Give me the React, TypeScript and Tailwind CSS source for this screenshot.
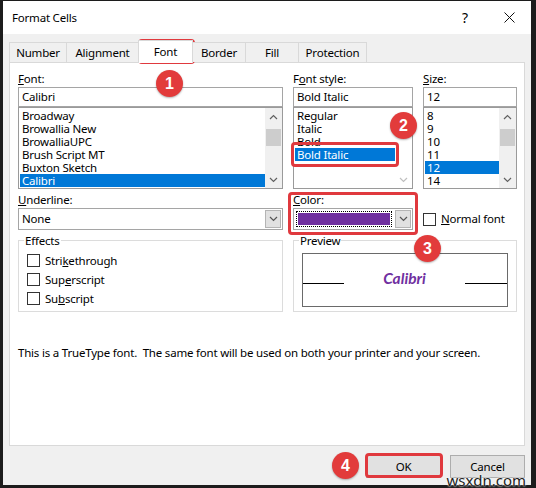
import clsx from "clsx"

const RED = "border-[#e0393e]"

function Chevron({ up, className }: { up?: boolean; className?: string }) {
  return (
    <svg width="9" height="6" viewBox="0 0 9 6" className={className}>
      <polyline
        points={up ? "1,5 4.5,1.5 8,5" : "1,1 4.5,4.5 8,1"}
        fill="none"
        stroke="currentColor"
        strokeWidth="1.2"
      />
    </svg>
  )
}

function ListBox({ items, selected, scroll }: { items: string[]; selected: number; scroll: "full" | "off" }) {
  return (
    <div className="flex h-[82px] border border-[#9a9a9a] bg-white">
      <div className="flex-1 overflow-hidden pt-[1px] pl-px">
        {items.map((t, i) => (
          <div
            key={t}
            className={clsx("h-[13px] pl-[2px] leading-[13px]", i === selected && "bg-[#0078d7] text-white")}
          >
            {t}
          </div>
        ))}
      </div>
      {scroll === "full" ? (
        <div className="flex w-[17px] flex-col bg-[#f0f0f0]">
          <div className="flex h-[17px] items-center justify-center text-[#606060]">
            <Chevron up />
          </div>
          <div className="mx-px mt-[4px] h-[17px] bg-[#cdcdcd]" />
          <div className="flex-1" />
          <div className="flex h-[17px] items-center justify-center text-[#606060]">
            <Chevron />
          </div>
        </div>
      ) : (
        <div className="flex w-[17px] flex-col justify-between">
          <div className="flex h-[17px] items-center justify-center text-[#bfbfbf]">
            <Chevron up />
          </div>
          <div className="flex h-[17px] items-center justify-center text-[#bfbfbf]">
            <Chevron />
          </div>
        </div>
      )}
    </div>
  )
}

function Field({ label, value }: { label: React.ReactNode; value: string }) {
  return (
    <>
      <div className="h-[17px] leading-[17px]">{label}</div>
      <div className="flex h-[20px] items-center border border-[#a5a5a5] bg-white pl-[3px]">{value}</div>
    </>
  )
}

function DropButton() {
  return (
    <div className="m-px flex w-[16px] items-center justify-center border border-[#b4b4b4] bg-[#e1e1e1] text-[#555]">
      <Chevron />
    </div>
  )
}

function Check({ children }: { children: React.ReactNode }) {
  return (
    <div className="flex h-[19px] items-center gap-[5px]">
      <div className="h-[13px] w-[13px] border border-[#333] bg-white" />
      <span>{children}</span>
    </div>
  )
}

function Badge({ n, className }: { n: number; className: string }) {
  return (
    <div
      className={clsx(
        "absolute flex h-[27px] w-[27px] items-center justify-center rounded-full bg-[#e23b3b] font-['Liberation_Sans',sans-serif] text-[16px] font-bold tracking-normal text-white shadow-[0_1px_2px_rgba(0,0,0,0.3)]",
        className
      )}
    >
      {n}
    </div>
  )
}

const tabs = [
  { name: "Number", w: "w-[58px]" },
  { name: "Alignment", w: "w-[73px]" },
  { name: "Font", w: "w-[55px]", active: true },
  { name: "Border", w: "w-[54px]" },
  { name: "Fill", w: "w-[54px]" },
  { name: "Protection", w: "w-[69px]" },
]

export default function App() {
  return (
    <div className="relative flex h-[488px] w-[536px] flex-col bg-[#1c1c1c] pt-px pr-[5px] pb-[3px] pl-[3px] font-['Noto_Sans',sans-serif] text-[11.5px] tracking-[-0.2px] text-black">
      {/* title bar */}
      <div className="flex h-[33px] items-center bg-white pl-[9px]">
        <span className="flex-1">Format Cells</span>
        <span className="w-[42px] text-[14px]">?</span>
        <svg width="11" height="11" viewBox="0 0 11 11" className="mr-[16px]">
          <path d="M0.5 0.5 L10.5 10.5 M10.5 0.5 L0.5 10.5" stroke="#111" strokeWidth="1" />
        </svg>
      </div>

      <div className="flex flex-1 flex-col bg-[#f0f0f0] px-[6px]">
        {/* tabs */}
        <div className="relative z-10 mt-[6px] flex h-[22px] items-end">
          {tabs.map((t) =>
            t.active ? (
              <div
                key={t.name}
                className={clsx(
                  "-mb-px -ml-px flex h-[23px] items-start justify-center border-x border-t border-[#d9d9d9] bg-white pt-[2px]",
                  t.w
                )}
              >
                {t.name}
              </div>
            ) : (
              <div
                key={t.name}
                className={clsx(
                  "-ml-px flex h-[20px] items-center justify-center border-x border-t border-[#d9d9d9] bg-[#f0f0f0] first:ml-0",
                  t.w
                )}
              >
                {t.name}
              </div>
            )
          )}
        </div>

        {/* panel */}
        <div className="flex flex-1 flex-col border border-[#d9d9d9] bg-white px-[8px] pt-[7px]">
          <div className="grid grid-cols-[265px_120px_94px] gap-x-[10px]">
            <div>
              <Field label={<><u>F</u>ont:</>} value="Calibri" />
              <ListBox
                items={["Broadway", "Browallia New", "BrowalliaUPC", "Brush Script MT", "Buxton Sketch", "Calibri"]}
                selected={5}
                scroll="full"
              />
            </div>
            <div>
              <Field label={<>F<u>o</u>nt style:</>} value="Bold Italic" />
              <ListBox items={["Regular", "Italic", "Bold", "Bold Italic"]} selected={3} scroll="off" />
            </div>
            <div>
              <Field label={<><u>S</u>ize:</>} value="12" />
              <ListBox items={["8", "9", "10", "11", "12", "14"]} selected={4} scroll="full" />
            </div>

            {/* underline / color / normal font */}
            <div className="mt-[2px]">
              <div className="h-[17px] leading-[17px]">
                <u>U</u>nderline:
              </div>
              <div className="flex h-[22px] border border-[#a5a5a5] bg-white">
                <span className="flex flex-1 items-center pl-[3px]">None</span>
                <DropButton />
              </div>
            </div>
            <div className="mt-[2px]">
              <div className="h-[17px] leading-[17px]">
                <u>C</u>olor:
              </div>
              <div className="flex h-[22px] border border-[#a5a5a5] bg-white">
                <div className="m-[2px] flex-1 border border-dotted border-black p-px">
                  <div className="h-full bg-[#7030a0]" />
                </div>
                <DropButton />
              </div>
            </div>
            <div className="mt-[2px] pt-[17px]">
              <div className="flex h-[22px] items-center gap-[5px]">
                <div className="h-[13px] w-[13px] border border-[#333] bg-white" />
                <span>
                  <u>N</u>ormal font
                </span>
              </div>
            </div>

            {/* groups */}
            <fieldset className="mt-[2px] h-[80px] border border-[#dcdcdc]">
              <legend className="ml-[5px] px-px leading-[17px]">Effects</legend>
              <div className="pt-[2px] pl-[8px]">
                <Check>
                  Stri<u>k</u>ethrough
                </Check>
                <Check>
                  Sup<u>e</u>rscript
                </Check>
                <Check>
                  Su<u>b</u>script
                </Check>
              </div>
            </fieldset>
            <fieldset className="col-span-2 mt-[2px] h-[80px] border border-[#dcdcdc]">
              <legend className="ml-[5px] px-px leading-[17px]">Preview</legend>
              <div className="mx-[8px] mt-[4px] h-[54px] border border-[#6a6a6a] pt-[16px]">
                <div className="flex items-end">
                  <div className="mb-[3px] h-px w-[41px] bg-black" />
                  <span className="flex-1 text-center font-['Lato',sans-serif] text-[15.5px] leading-[17px] font-bold tracking-normal text-[#7030a0] italic">
                    Calibri
                  </span>
                  <div className="mb-[3px] h-px w-[42px] bg-black" />
                </div>
              </div>
            </fieldset>
          </div>

          <div className="mt-[32px] leading-[17px] whitespace-pre">
            This is a TrueType font.  The same font will be used on both your printer and your screen.
          </div>
        </div>

        {/* footer */}
        <div className="flex h-[39px] justify-end gap-[9px] pt-[9px]">
          <div className="flex h-[23px] w-[75px] items-center justify-center border border-[#adadad] bg-[#e1e1e1]">OK</div>
          <div className="flex h-[23px] w-[75px] items-center justify-center border border-[#adadad] bg-[#e1e1e1]">
            Cancel
          </div>
        </div>
      </div>

      {/* annotations */}
      <div className={clsx("absolute top-[39px] left-[138px] h-[25px] w-[57px] rounded-[4px] border-[3px]", RED)} />
      <Badge n={1} className="top-[70px] left-[156px]" />
      <Badge n={2} className="top-[112px] left-[390px]" />
      <div className={clsx("absolute top-[142px] left-[291px] h-[25px] w-[108px] rounded-[4px] border-[3px]", RED)} />
      <div className={clsx("absolute top-[192px] left-[288px] h-[43px] w-[130px] rounded-[4px] border-[3px]", RED)} />
      <Badge n={3} className="top-[235px] left-[414px]" />
      <Badge n={4} className="top-[452px] left-[332px]" />
      <div className={clsx("absolute top-[453px] left-[365px] h-[25px] w-[78px] rounded-[4px] border-[3px]", RED)} />

      <div className="absolute right-[10px] bottom-0 text-[15px] leading-[16px] tracking-normal text-[#222] [text-shadow:0_0_2px_#fff,0_0_2px_#fff]">
        wsxdn.com
      </div>
    </div>
  )
}
